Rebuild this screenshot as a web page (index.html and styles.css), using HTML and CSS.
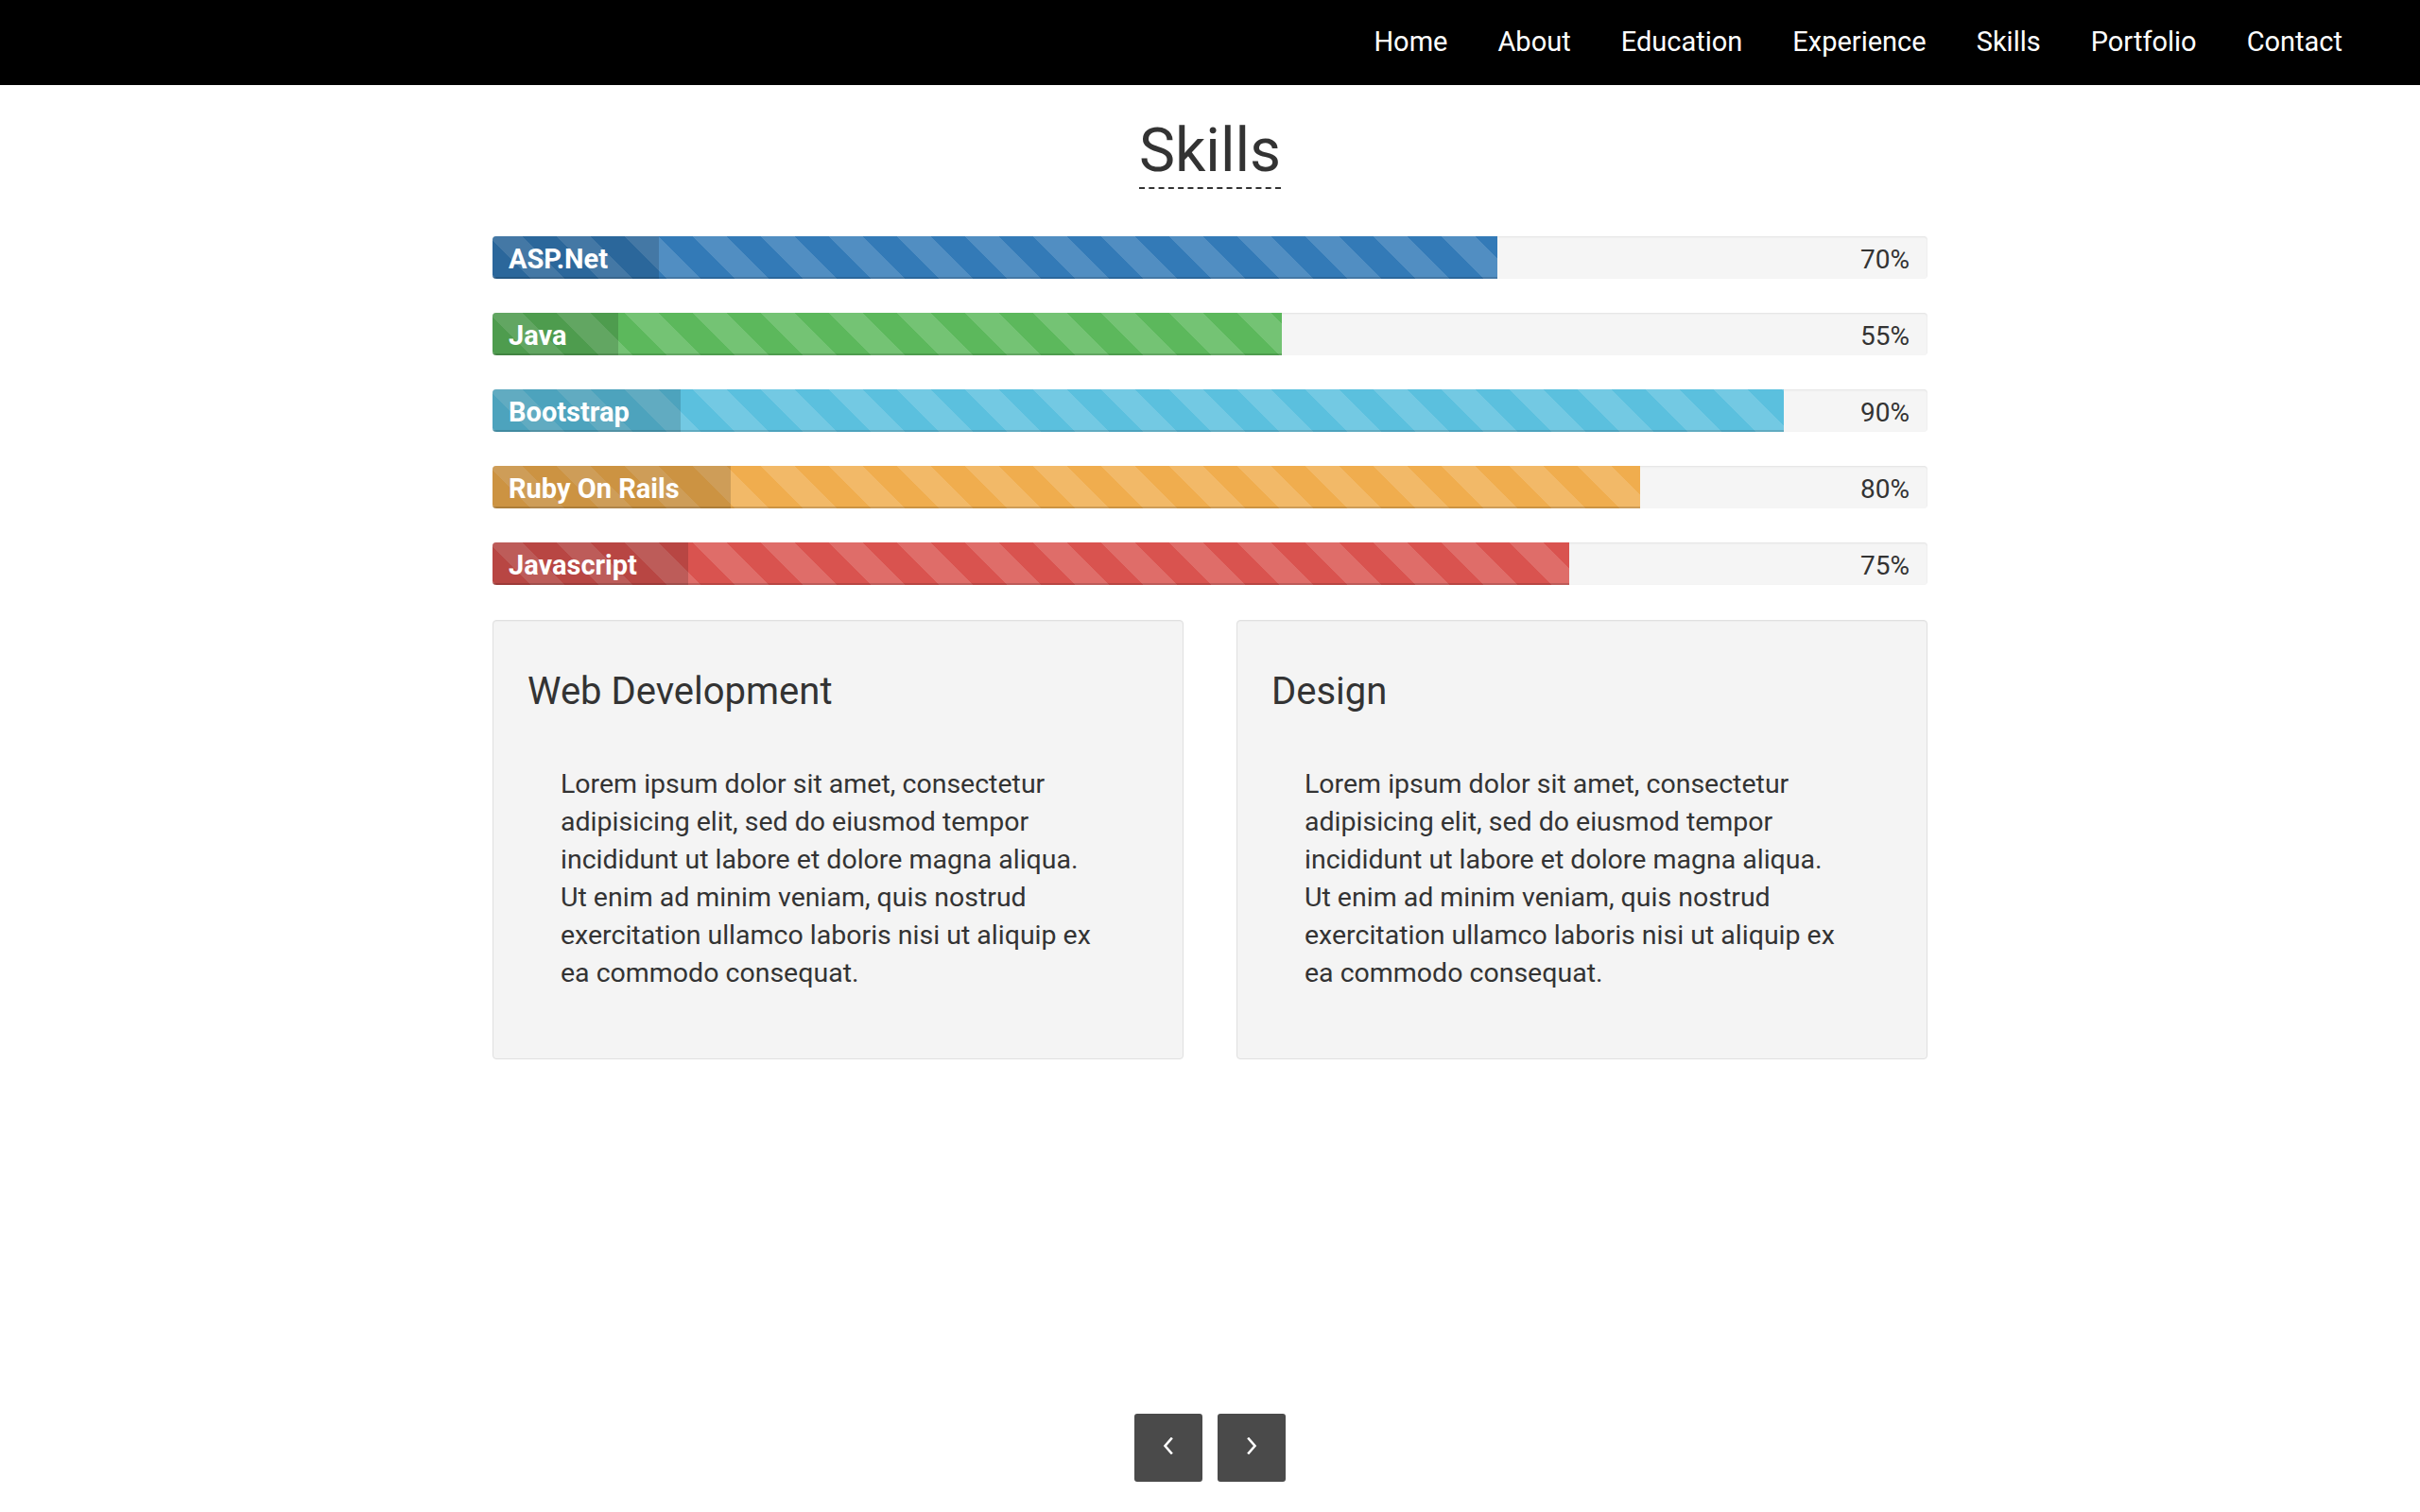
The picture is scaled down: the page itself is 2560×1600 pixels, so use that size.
FILE: index.html
```html
<!DOCTYPE html>
<html lang="en">
<head>
<meta charset="utf-8">
<title>Skills</title>
<link rel="stylesheet" href="styles.css">
</head>
<body>
<header class="navbar">
  <nav class="nav-links">
    <a href="#">Home</a>
    <a href="#">About</a>
    <a href="#">Education</a>
    <a href="#">Experience</a>
    <a href="#">Skills</a>
    <a href="#">Portfolio</a>
    <a href="#">Contact</a>
  </nav>
</header>
<main class="section">
  <div class="section-head">
    <h2 class="section-title">Skills</h2>
  </div>
  <div class="skills">
    <div class="skill">
      <div class="skill-fill fill-blue" style="width:70%"><span class="skill-label">ASP.Net</span></div>
      <span class="skill-pct">70%</span>
    </div>
    <div class="skill">
      <div class="skill-fill fill-green" style="width:55%"><span class="skill-label">Java</span></div>
      <span class="skill-pct">55%</span>
    </div>
    <div class="skill">
      <div class="skill-fill fill-cyan" style="width:90%"><span class="skill-label">Bootstrap</span></div>
      <span class="skill-pct">90%</span>
    </div>
    <div class="skill">
      <div class="skill-fill fill-orange" style="width:80%"><span class="skill-label">Ruby On Rails</span></div>
      <span class="skill-pct">80%</span>
    </div>
    <div class="skill">
      <div class="skill-fill fill-red" style="width:75%"><span class="skill-label">Javascript</span></div>
      <span class="skill-pct">75%</span>
    </div>
  </div>
  <div class="cards">
    <div class="well">
      <h3 class="well-title">Web Development</h3>
      <p class="well-text">Lorem ipsum dolor sit amet, consectetur adipisicing elit, sed do eiusmod tempor incididunt ut labore et dolore magna aliqua. Ut enim ad minim veniam, quis nostrud exercitation ullamco laboris nisi ut aliquip ex ea commodo consequat.</p>
    </div>
    <div class="well">
      <h3 class="well-title">Design</h3>
      <p class="well-text">Lorem ipsum dolor sit amet, consectetur adipisicing elit, sed do eiusmod tempor incididunt ut labore et dolore magna aliqua. Ut enim ad minim veniam, quis nostrud exercitation ullamco laboris nisi ut aliquip ex ea commodo consequat.</p>
    </div>
  </div>
  <div class="pager">
    <a href="#" class="pager-btn" aria-label="Previous">
      <svg width="12" height="18" viewBox="0 0 12 18"><polyline points="9,1.5 2.5,9 9,16.5" fill="none" stroke="#fff" stroke-width="2.6" stroke-linecap="square"/></svg>
    </a>
    <a href="#" class="pager-btn" aria-label="Next">
      <svg width="12" height="18" viewBox="0 0 12 18"><polyline points="3,1.5 9.5,9 3,16.5" fill="none" stroke="#fff" stroke-width="2.6" stroke-linecap="square"/></svg>
    </a>
  </div>
</main>
</body>
</html>
```

FILE: styles.css
```css
html, body {
  margin: 0;
  padding: 0;
}

body {
  font-family: Roboto, "Liberation Sans", Arial, sans-serif;
  color: #333;
  background: #fff;
}

.navbar {
  height: 90px;
  background: #000;
  display: flex;
  align-items: center;
  justify-content: flex-end;
  padding-right: 82px;
}

.nav-links {
  display: flex;
  gap: 53px;
  padding-bottom: 2px;
}

.nav-links a {
  color: #fff;
  text-decoration: none;
  font-size: 29px;
  line-height: 40px;
}

.section {
  width: 1518px;
  margin: 0 auto;
  height: calc(100vh - 90px);
  box-sizing: border-box;
  display: flex;
  flex-direction: column;
  padding-bottom: 32px;
}

.section-head {
  text-align: center;
  margin-top: 35px;
}

.section-title {
  display: inline-block;
  margin: 0;
  font-size: 64px;
  font-weight: 400;
  line-height: 70px;
  padding-bottom: 3px;
  border-bottom: 2px dashed #333;
}

.skills {
  margin-top: 50px;
}

.skill {
  height: 45px;
  margin-bottom: 36px;
  background: #f5f5f5;
  border-radius: 4px;
  box-shadow: inset 0 1px 2px rgba(0, 0, 0, 0.08);
  display: flex;
  align-items: center;
  overflow: hidden;
}

.skill-fill {
  height: 100%;
  flex: none;
  display: flex;
  box-shadow: inset 0 -2px 0 rgba(0, 0, 0, 0.15);
  background-image: linear-gradient(45deg,
    rgba(255, 255, 255, 0.15) 25%, transparent 25%,
    transparent 50%, rgba(255, 255, 255, 0.15) 50%,
    rgba(255, 255, 255, 0.15) 75%, transparent 75%, transparent);
  background-size: 72px 72px;
  background-position: -5px 0;
}

.fill-blue { background-color: #337ab7; }
.fill-green { background-color: #5cb85c; }
.fill-cyan { background-color: #5bc0de; }
.fill-orange { background-color: #f0ad4e; }
.fill-red { background-color: #d9534f; }

.skill-label {
  display: block;
  height: 100%;
  box-sizing: border-box;
  line-height: 41px;
  padding: 4px 54px 0 17px;
  background: rgba(0, 0, 0, 0.15);
  color: #fff;
  font-size: 29px;
  font-weight: 700;
  white-space: nowrap;
}

.skill-pct {
  margin-left: auto;
  padding-right: 19px;
  font-size: 28px;
  color: #333;
  line-height: 45px;
  padding-top: 3px;
}

.cards {
  display: grid;
  grid-template-columns: 1fr 1fr;
  gap: 56px;
  margin-top: 1px;
}

.well {
  background: #f4f4f4;
  border: 1px solid #e0e0e0;
  border-radius: 4px;
  box-shadow: inset 0 1px 1px rgba(0, 0, 0, 0.03);
  padding: 53px 36px 70px;
}

.well-title {
  margin: 0;
  font-size: 40px;
  font-weight: 400;
  line-height: 44px;
  color: #333;
}

.well-text {
  margin: 56px 0 0 35px;
  width: 578px;
  font-size: 28.5px;
  line-height: 40px;
  color: #333;
}

.pager {
  margin-top: auto;
  display: flex;
  justify-content: center;
  gap: 16px;
}

.pager-btn {
  width: 72px;
  height: 72px;
  background: #4a4a4a;
  border-radius: 3px;
  display: flex;
  align-items: center;
  justify-content: center;
  padding-bottom: 5px;
  box-sizing: border-box;
}

.pager-btn svg {
  display: block;
}
```
